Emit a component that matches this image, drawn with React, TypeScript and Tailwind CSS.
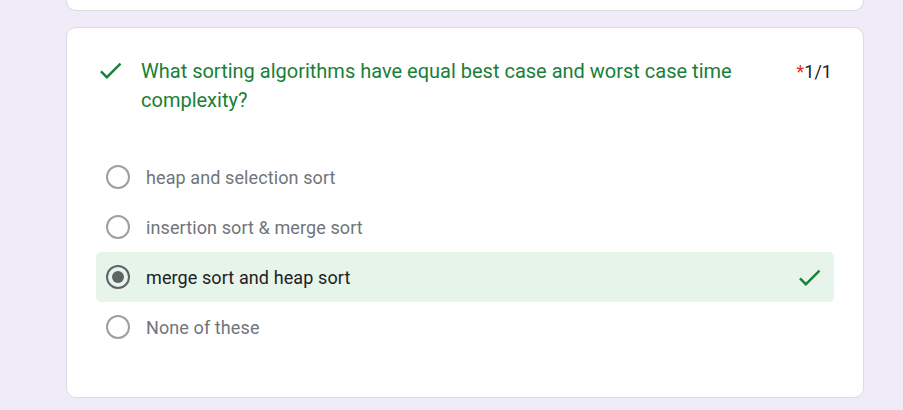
import React from "react";

const Check = ({ className }: { className?: string }) => (
  <svg viewBox="0 0 24 24" className={className} fill="currentColor">
    <path d="M9 16.17L4.83 12l-1.42 1.41L9 19 21 7l-1.41-1.41z" />
  </svg>
);

const options = [
  { label: "heap and selection sort", selected: false },
  { label: "insertion sort & merge sort", selected: false },
  { label: "merge sort and heap sort", selected: true },
  { label: "None of these", selected: false },
];

export default function App() {
  return (
    <div
      className="min-h-[410px] w-[903px] bg-[#f0ebf8] pl-[66px]"
      style={{ fontFamily: "Roboto, Arial, sans-serif" }}
    >
      <div className="h-[11px] w-[798px] rounded-b-[10px] border-x border-b border-[#dadce0] bg-white" />
      <div className="mt-[16px] w-[798px] rounded-[10px] border border-[#dadce0] bg-white px-[29px] pt-[29px] pb-[45px]">
        <div className="flex items-start">
          <Check className="mt-[-1px] h-[29px] w-[29px] shrink-0 text-[#188038]" />
          <div className="ml-[16px] flex-1 pr-[40px] text-[20px] leading-[29px] text-[#188038]">
            What sorting algorithms have equal best case and worst case time complexity?
          </div>
          <div className="shrink-0 pr-[2px] text-[18px] leading-[29px] text-[#202124]">
            <span className="text-[#d93025]">*</span>1/1
          </div>
        </div>
        <div className="mt-[37px] flex flex-col">
          {options.map((o) => (
            <div
              key={o.label}
              className={`flex h-[50px] items-center rounded-[5px] pl-[10px] pr-[10px] ${
                o.selected ? "bg-[#e6f4ea]" : ""
              }`}
            >
              <div
                className={`flex h-[24px] w-[24px] shrink-0 items-center justify-center rounded-full border-2 ${
                  o.selected ? "border-[#5f6368]" : "border-[#9aa0a6]"
                }`}
              >
                {o.selected && <div className="h-[12px] w-[12px] rounded-full bg-[#5f6368]" />}
              </div>
              <div
                className={`ml-[16px] flex-1 text-[18px] tracking-[0.1px] ${
                  o.selected ? "text-[#202124]" : "text-[#70757a]"
                }`}
              >
                {o.label}
              </div>
              {o.selected && <Check className="h-[29px] w-[29px] shrink-0 text-[#188038]" />}
            </div>
          ))}
        </div>
      </div>
    </div>
  );
}
